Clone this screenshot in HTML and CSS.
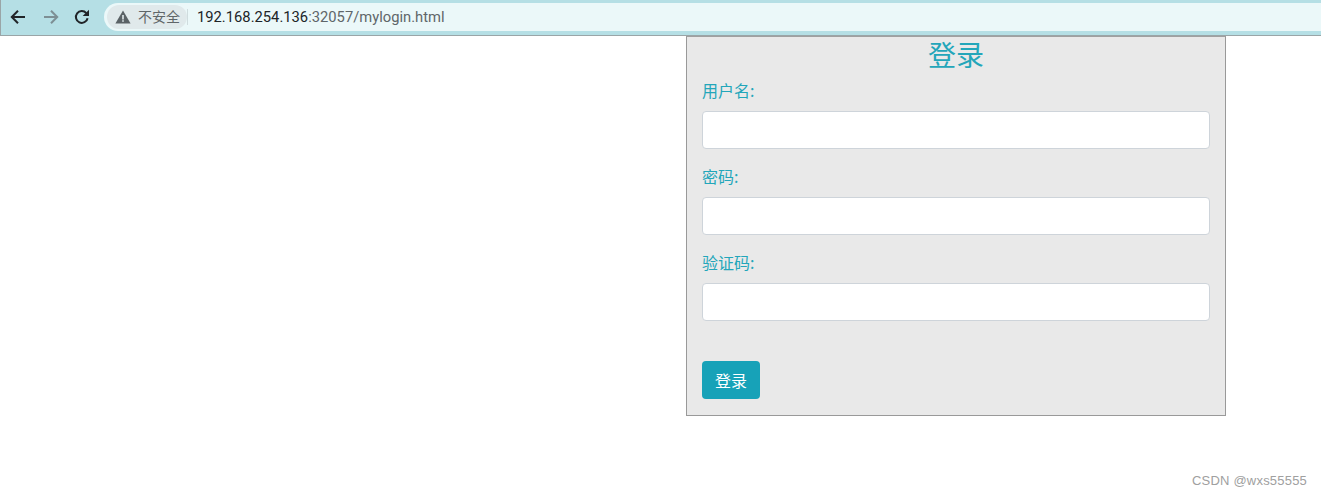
FILE: index.html
```html
<!DOCTYPE html>
<html lang="zh-CN">
<head>
<meta charset="utf-8">
<title>登录</title>
<link rel="stylesheet" href="styles.css">
</head>
<body>
<header class="toolbar">
  <button class="nav" aria-label="back"><svg width="18" height="18" viewBox="0 0 18 18"><path d="M16 9H3M9 2.8 2.8 9 9 15.2" fill="none" stroke="#202428" stroke-width="2"/></svg></button>
  <button class="nav" aria-label="forward"><svg width="18" height="18" viewBox="0 0 18 18"><path d="M2 9h13M9 2.8 15.2 9 9 15.2" fill="none" stroke="#7d8f94" stroke-width="2"/></svg></button>
  <button class="nav nav-reload" aria-label="reload"><svg width="18" height="18" viewBox="0 0 18 18"><path d="M14.6 10.2a5.9 5.9 0 1 1-1.3-5.1" fill="none" stroke="#202428" stroke-width="2"/><path d="M16 1.8v6.3H9.7z" fill="#202428"/></svg></button>
  <div class="omnibox">
    <span class="chip"><svg width="16" height="14" viewBox="0 0 16 14"><path d="M8 0.5 15.6 13.5H.4z" fill="#5a6266"/><path d="M7.2 5h1.6v4.4H7.2zM7.2 10.2h1.6v1.6H7.2z" fill="#e0e9eb"/></svg><span class="chip-text">不安全</span></span>
    <span class="divider"></span>
    <span class="url"><span class="host">192.168.254.136</span>:32057/mylogin.html</span>
  </div>
</header>
<main class="page">
  <form class="panel">
    <h1 class="title">登录</h1>
    <div class="group"><label class="label">用户名:</label><input class="field" type="text"></div>
    <div class="group"><label class="label">密码:</label><input class="field" type="password"></div>
    <div class="group"><label class="label">验证码:</label><input class="field" type="text"></div>
    <button class="submit" type="button">登录</button>
  </form>
</main>
<div class="mark">CSDN @wxs55555</div>
</body>
</html>
```
FILE: styles.css
```css
* { box-sizing: border-box; }
html, body { margin: 0; height: 495px; overflow: hidden; background: #fff; }
body { font-family: "Noto Sans CJK SC", "Liberation Sans", sans-serif; position: relative; }
.toolbar {
  height: 36px;
  background: #b5dfe5;
  border-bottom: 1px solid #9aa5a7;
  border-left: 1px solid #9aa5a7;
  display: flex;
  align-items: center;
  padding-left: 7px;
  padding-bottom: 1px;
}
.nav {
  width: 32px;
  height: 28px;
  padding: 0;
  border: 0;
  background: none;
  display: flex;
  align-items: center;
  justify-content: center;
}
.nav:first-child { margin-left: -6px; margin-right: 1px; }
.nav-reload { margin-left: -1px; margin-right: 1px; }
.omnibox {
  margin-left: 5px;
  flex: 1;
  height: 28px;
  background: #ebf8f9;
  border-radius: 14px 0 0 14px;
  display: flex;
  align-items: center;
  padding-left: 3px;
}
.chip {
  height: 24px;
  width: 80px;
  border-radius: 12px;
  background: #e0e9eb;
  display: flex;
  align-items: center;
  padding-left: 8px;
  gap: 7px;
  font-size: 14px;
  color: #5f6669;
}
.chip-text { line-height: 22px; height: 24px; }
.divider { width: 1px; height: 16px; background: #cfdcde; }
.url {
  margin-left: 9px;
  font: 14.75px "Roboto", "Liberation Sans", sans-serif;
  color: #5f6669;
}
.host { color: #202428; }
.page { display: flex; padding-left: 686px; }
.panel {
  width: 540px;
  height: 380px;
  background: #e9e9e9;
  border: 1px solid #999;
  border-top-color: #a0a0a0;
  padding: 0 15px;
  color: #23a6ba;
}
.title {
  margin: 0;
  height: 38px;
  font-size: 28px;
  font-weight: 400;
  line-height: 34px;
  text-align: center;
}
.group { margin-bottom: 15px; }
.group:first-of-type { margin-top: 3px; }
.label {
  display: block;
  height: 24px;
  margin: 0 0 9px;
  font-size: 16px;
  line-height: 24px;
}
.field {
  display: block;
  width: 100%;
  height: 38px;
  background: #fff;
  border: 1px solid #ced4da;
  border-radius: 4px;
}
.submit {
  display: block;
  margin-top: 40px;
  width: 58px;
  height: 38px;
  padding: 0;
  border: 0;
  border-radius: 4px;
  background: #17a2b8;
  color: #fff;
  font: 16px "Noto Sans CJK SC", sans-serif;
}
.mark {
  position: absolute;
  right: 14px;
  bottom: 7px;
  font: 13px "Liberation Sans", sans-serif;
  letter-spacing: 0.2px;
  color: #a0a0a0;
}
```
